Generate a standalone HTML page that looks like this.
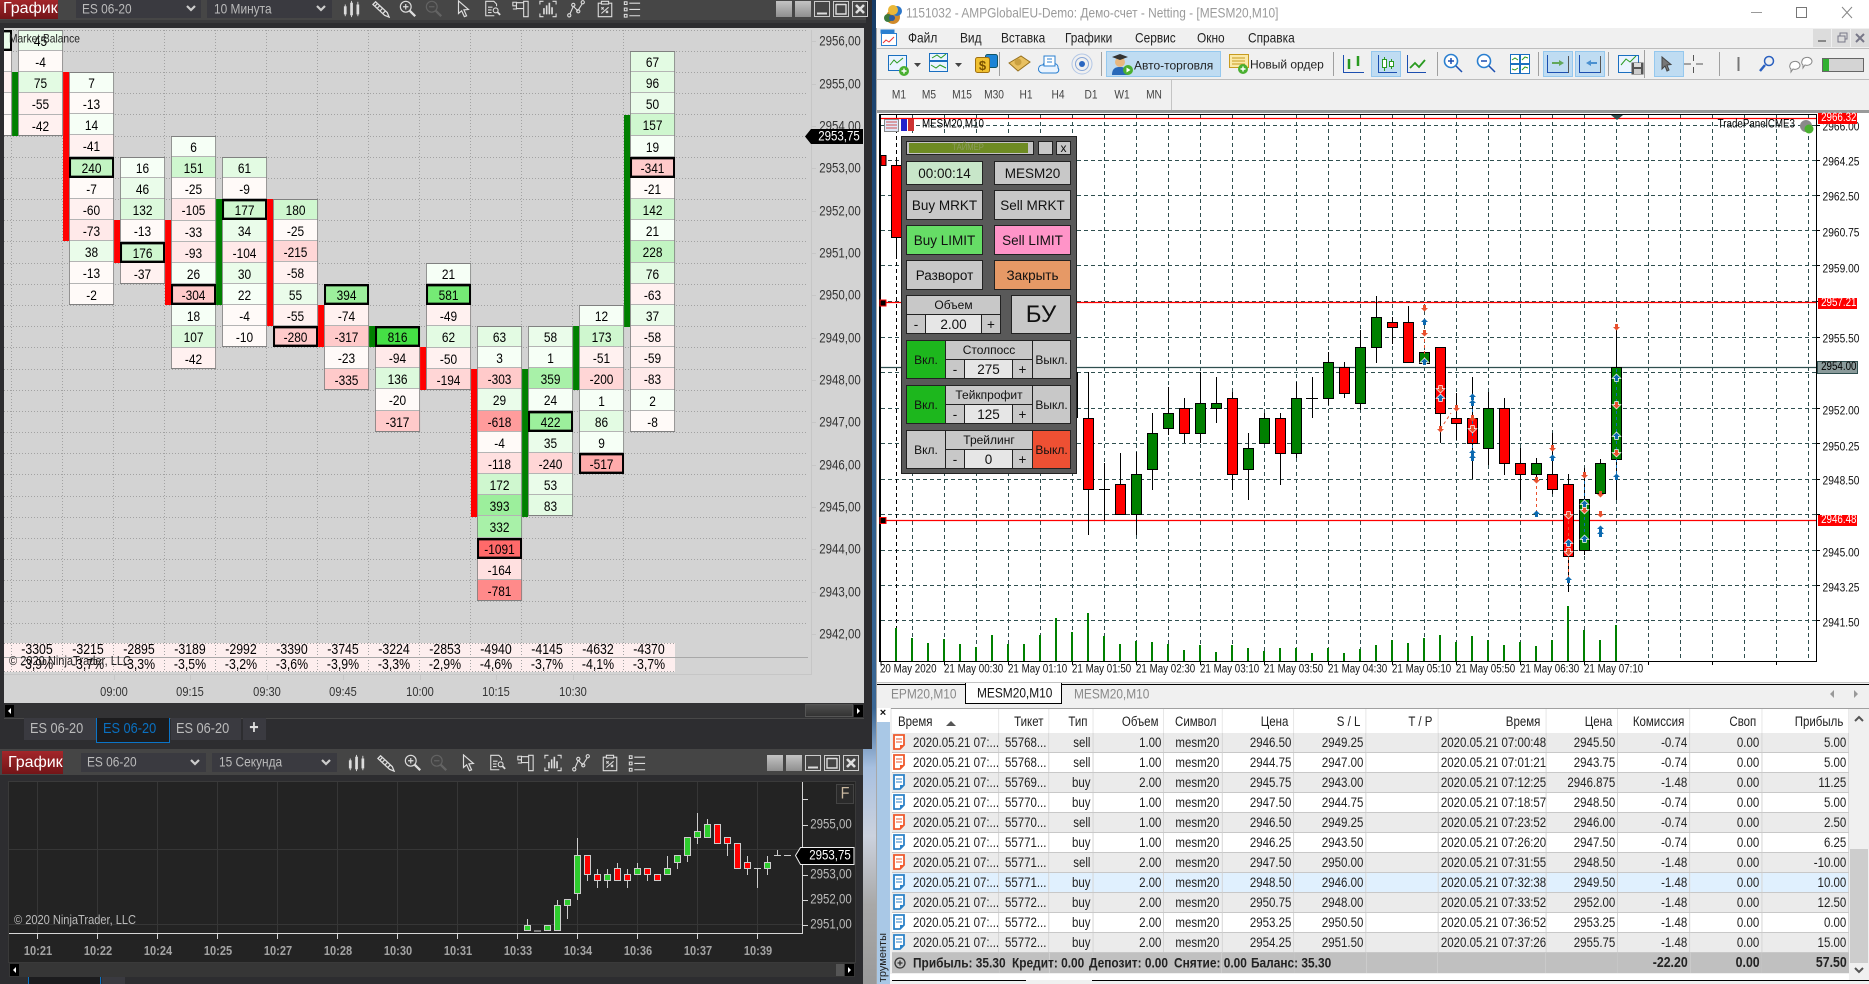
<!DOCTYPE html>
<html><head><meta charset="utf-8"><title>Chart</title>
<style>
html,body{margin:0;padding:0;width:1869px;height:984px;overflow:hidden;background:#8c9cb8}
body{font-family:"Liberation Sans","Noto Sans CJK SC",sans-serif;position:relative;color:#000}
div,svg{position:absolute}
.c,.l,.r{position:absolute;white-space:nowrap;line-height:1.1}
.c{transform:translate(-50%,-50%) scaleX(.85)}
.l{transform:translateY(-50%) scaleX(.85);transform-origin:0 50%}
.r{transform:translate(-100%,-50%) scaleX(.85);transform-origin:100% 50%}
.col{width:53px;transform:scaleX(.85);transform-origin:0 0;font-size:14px;text-align:center}
.col::after{content:"";position:absolute;inset:0;border:1px solid #808080;pointer-events:none}
.col b{display:block;height:21.17px;line-height:23px;font-weight:400;box-shadow:inset 0 -1px 0 #b4b4b4}
.col b.h{position:relative;z-index:2;box-shadow:inset 0 0 0 2.4px #000}
.g0{background:#f6fff6}.g1{background:#eafcea}.g2{background:#e3fbe3}.g3{background:#dcf9dc}.g4{background:#cff7cf}.g5{background:#c2f4c2}.g6{background:#a8f1a8}.g7{background:#9cef9c}.g8{background:#75ea75}.g9{background:#45e045}
.n0{background:#fffaf8}.n1{background:#fff1f0}.n2{background:#ffe9e9}.n3{background:#ffe0e0}.n4{background:#ffd6d6}.n5{background:#ffcaca}.n6{background:#ffabab}.n7{background:#ff9c9c}.n8{background:#ff8a8a}.n9{background:#ff6a6a}
.bar{width:6px}
.rd{background:#f00}.gr{background:#008000}
.p{font-size:13.5px;color:#333;margin:1px 0 0 2px}
.t1{font-size:14px}
.t3{font-size:14.5px}
.t2{font-size:13px;color:#333}
.nb{font-size:13px;color:#a4a4a4;font-weight:700}
.pb{font-size:13.5px;color:#bbb;margin-left:2px}
.sq{width:16px;height:16px;background:linear-gradient(#c4c4c4,#8f8f8f)}
.btn{background:#c8c8c8;border:1px solid #222;box-sizing:border-box;display:flex;align-items:center;justify-content:center;font-size:13.5px;color:#111;white-space:nowrap}
.sm{font-size:12px}
.sep{width:1px;background:#a0a0a0;top:52px;height:24px}
.tb{background:#bfdcf2;border:1px solid #95c8ee;box-sizing:border-box;top:51px;height:26px}
.m{font-size:14px;color:#222}
.tf{font-size:12px;color:#444}
.yl{font-size:12px;color:#111;margin:1.5px 0 0 3px}
.xl{font-size:11.5px;color:#111}
.lb{left:1818px;width:39px;height:11px;background:#f00;color:#fff;font-size:11.5px;text-align:center;line-height:11px}
table{position:absolute;left:892px;top:709px;width:1125.9px;table-layout:fixed;border-collapse:collapse;transform:scaleX(.85);transform-origin:0 0;font-size:13.5px;background:#fff}
td,th{padding:0 2.5px 0 3px;text-align:right;white-space:nowrap;overflow:hidden;height:19px;line-height:19px;font-weight:400;border-right:1px solid #cfcfcf;border-bottom:1px solid #c8c8c8;color:#222}
th{height:24px;padding-right:6px;background:#fff;border-bottom:0;border-right:1px solid #e3e3e3}
td:first-child{text-align:left;padding-left:24.7px}
th:first-child{text-align:left;padding-left:7px}
tr.o td{background:#ebebeb}
tr.s td{background:#e0f0fe}
tr.z td{background:#c0c0c0;font-weight:700;border-right:0;border-bottom:0;height:20px;font-size:14.5px}
</style></head><body>

<svg width="0" height="0" style="left:0;top:0"><defs>
<symbol id="i1" viewBox="0 0 20 20"><g fill="#ddd"><rect x="1" y="7" width="3" height="9"/><rect x="2" y="5" width="1" height="13"/><rect x="8" y="3" width="3" height="14"/><rect x="9" y="1" width="1" height="18"/><rect x="15" y="5" width="3" height="11"/><rect x="16" y="2" width="1" height="16"/></g></symbol>
<symbol id="i2" viewBox="0 0 20 20"><g fill="none" stroke="#ddd" stroke-width="1.4"><path d="M1 5l3-3 13 12 2 5-5-2z"/><path d="M3 7l3-3M6 9l3-3M9 12l3-3M12 15l3-3"/></g></symbol>
<symbol id="i3" viewBox="0 0 20 20"><g fill="none" stroke="#ddd" stroke-width="1.3"><circle cx="7.5" cy="7.5" r="6"/><path d="M4.5 7.5h6M7.5 4.5v6"/><path d="M12 12l6 6" stroke-width="2.6"/></g></symbol>
<symbol id="i4" viewBox="0 0 20 20"><g fill="none" stroke="#777" stroke-width="1.3" opacity=".6"><circle cx="7.5" cy="7.5" r="6"/><path d="M4.5 7.5h6"/><path d="M12 12l6 6" stroke-width="2.6"/></g></symbol>
<symbol id="i5" viewBox="0 0 20 20"><path d="M5 1v14l3.5-3 3 6.5 2.5-1-3-6.5 5-.5z" fill="none" stroke="#ddd" stroke-width="1.3"/></symbol>
<symbol id="i6" viewBox="0 0 20 20"><g fill="none" stroke="#ddd" stroke-width="1.2"><path d="M12 17.5H2.5v-16h9l3 3V7"/><path d="M5 8h5M5 11h4M5 14h4"/><circle cx="13.5" cy="11.5" r="2.7"/><path d="M15.5 13.5l3 3" stroke-width="2"/></g></symbol>
<symbol id="i7" viewBox="0 0 20 20"><g fill="none" stroke="#ddd" stroke-width="1.2"><path d="M1.5 2.5h4v4h-4zM1.5 10h4V6.5M5.5 3h8M5.5 9.5h8M13.5 1.5h5v17h-5z"/></g></symbol>
<symbol id="i8" viewBox="0 0 20 20"><g fill="none" stroke="#ddd" stroke-width="1.2"><path d="M1 5V1.500h4M15 1.500h4V5M1 15v3.500h4M15 18.500h4V15"/><path d="M5.500 9v7M8.500 6v10M11.500 3v13M14.500 8v8" stroke-width="1.8"/></g></symbol>
<symbol id="i9" viewBox="0 0 20 20"><g fill="none" stroke="#ddd" stroke-width="1.2"><path d="M3.500 15l3.500-8 5 5 5-8"/><circle cx="2.500" cy="17" r="1.800"/><circle cx="7" cy="5.500" r="1.800"/><circle cx="12.500" cy="12.500" r="1.800"/><circle cx="17.500" cy="2.500" r="1.800"/></g></symbol>
<symbol id="i10" viewBox="0 0 20 20"><g fill="none" stroke="#ddd" stroke-width="1.2"><path d="M6 3.500H2.500v15h15v-15H14M6 1.500h8v3H6z"/><path d="M6 8l2.500 2.500M8.500 8L6 10.500M11 12l2.500 2.500M13.500 12L11 14.500M6 15l8-7"/></g></symbol>
<symbol id="i11" viewBox="0 0 20 20"><g fill="none" stroke="#ddd" stroke-width="1.200"><rect x="1.500" y="2" width="3" height="3"/><rect x="1.500" y="9" width="3" height="3"/><rect x="1.500" y="16" width="3" height="3"/><path d="M7 3.500h12M7 10.500h12M7 17.500h12"/></g></symbol>
<symbol id="wmin" viewBox="0 0 16 16"><rect x=".5" y=".5" width="15" height="15" fill="none" stroke="#ccc"/><path d="M3 12.500h10" stroke="#ddd" stroke-width="2"/></symbol>
<symbol id="wmax" viewBox="0 0 16 16"><rect x=".5" y=".5" width="15" height="15" fill="none" stroke="#ccc"/><path d="M3 3.500h10M3 3v10h10V3" fill="none" stroke="#ddd" stroke-width="1.400"/></symbol>
<symbol id="wcl" viewBox="0 0 16 16"><rect x=".5" y=".5" width="15" height="15" fill="none" stroke="#ccc"/><path d="M4 4l8 8M12 4l-8 8" stroke="#ddd" stroke-width="2.600"/></symbol>
<symbol id="so" viewBox="0 0 13 16"><path d="M1 1h10v10l-4 4H1z" fill="#fff" stroke="#ef5a2c" stroke-width="1.800"/><path d="M3 5h6M3 8h6" stroke="#ef5a2c"/><path d="M7 15v-4h4z" fill="#ef5a2c"/></symbol>
<symbol id="sb" viewBox="0 0 13 16"><path d="M1 1h10v10l-4 4H1z" fill="#fff" stroke="#2d83c8" stroke-width="1.800"/><path d="M3 5h6M3 8h6" stroke="#2d83c8"/><path d="M7 15v-4h4z" fill="#2d83c8"/></symbol>
<path id="mu" d="M0-3.500 3.500 0h-2v3h-3V0h-2z"/>
<path id="md" d="M-1.500-3h3V0h2L0 3.500-3.500 0h2z"/>
</defs></svg>

<!-- wallpaper gap -->
<div style="left:860px;top:0;width:20px;height:984px;background:linear-gradient(#173c66 0,#2a5a8a 40%,#3a6795 72%,#a7c0e0 78%,#ccd2de 85%,#a8a8a8 92%,#9a9a9a 100%)"></div>

<!-- TOP LEFT WINDOW -->
<div style="left:0;top:0;width:872px;height:749px;background:#2d2d30"></div>
<div style="left:0;top:0;width:866px;height:20px;background:#464646"></div>
<div style="left:0;top:20px;width:866px;height:3px;background:#3a3a3c"></div>
<div style="left:0;top:0;width:58px;height:19px;background:linear-gradient(#a3262a,#731518)"></div>
<span class="l" style="left:3px;top:9px;font-size:16px;color:#fff;transform:translateY(-50%)">График</span>
<div style="left:76px;top:0;width:125px;height:18px;background:#3a3a40"></div>
<span class="l t1" style="left:82px;top:9px;color:#bbb">ES 06-20</span>
<svg style="left:185px;top:4px" width="12" height="9"><path d="M2 2l4 4 4-4" fill="none" stroke="#ccc" stroke-width="2.200"/></svg>
<div style="left:207px;top:0;width:125px;height:18px;background:#3a3a40"></div>
<span class="l t1" style="left:214px;top:9px;color:#bbb">10 Минута</span>
<svg style="left:315px;top:4px" width="12" height="9"><path d="M2 2l4 4 4-4" fill="none" stroke="#ccc" stroke-width="2.200"/></svg>
<svg style="left:342px;top:0" width="20" height="18"><use href="#i1"/></svg>
<svg style="left:371px;top:0" width="20" height="18"><use href="#i2"/></svg>
<svg style="left:399px;top:0" width="18" height="18"><use href="#i3"/></svg>
<svg style="left:425px;top:0" width="18" height="18"><use href="#i4"/></svg>
<svg style="left:453px;top:0" width="20" height="18"><use href="#i5"/></svg>
<svg style="left:483px;top:0" width="19" height="18"><use href="#i6"/></svg>
<svg style="left:511px;top:0" width="19" height="18"><use href="#i7"/></svg>
<svg style="left:539px;top:0" width="18" height="18"><use href="#i8"/></svg>
<svg style="left:567px;top:0" width="18" height="18"><use href="#i9"/></svg>
<svg style="left:596px;top:0" width="18" height="18"><use href="#i10"/></svg>
<svg style="left:623px;top:0" width="18" height="18"><use href="#i11"/></svg>
<div class="sq" style="left:776px;top:1px"></div><div class="sq" style="left:795px;top:1px"></div>
<svg style="left:814px;top:1px" width="16" height="16"><use href="#wmin"/></svg>
<svg style="left:833px;top:1px" width="16" height="16"><use href="#wmax"/></svg>
<svg style="left:852px;top:1px" width="16" height="16"><use href="#wcl"/></svg>

<!-- order-flow chart -->
<div style="left:4px;top:28px;width:860px;height:675px;overflow:hidden;background:#d3d3d3">
<div style="left:-4px;top:-28px;width:864px;height:703px">
<div style="left:4px;top:643px;width:671px;height:29px;background:#fdeeee"></div>
<svg width="864" height="703" style="left:0;top:0"><path fill="none" stroke="#a2a2a2" stroke-dasharray="1 2" d="M4 30.500H808M4 51.500H808M4 72.500H808M4 93.500H808M4 114.500H808M4 136.500H808M4 157.500H808M4 178.500H808M4 199.500H808M4 220.500H808M4 241.500H808M4 263.500H808M4 284.500H808M4 305.500H808M4 326.500H808M4 347.500H808M4 369.500H808M4 390.500H808M4 411.500H808M4 432.500H808M4 453.500H808M4 474.500H808M4 496.500H808M4 517.500H808M4 538.500H808M4 559.500H808M4 580.500H808M4 601.500H808M4 623.500H808M4 643.500H675M4 671.500H675M11.500 30V672M62.500 30V672M113.500 30V672M164.500 30V672M215.500 30V672M266.500 30V672M317.500 30V672M368.500 30V672M419.500 30V672M470.500 30V672M521.500 30V672M572.500 30V672M623.500 30V672"/><path fill="none" stroke="#a8a8a8" d="M4 657.500H808"/><path fill="none" stroke="#c6c6c6" d="M811.500 30V674M4 674.500H812M114.500 674V680M190.500 674V680M267.500 674V680M343.500 674V680M420.500 674V680M496.500 674V680M573.500 674V680M811 41.500h5M811 84.500h5M811 126.500h5M811 168.500h5M811 211.500h5M811 253.500h5M811 295.500h5M811 338.500h5M811 380.500h5M811 422.500h5M811 465.500h5M811 507.500h5M811 549.500h5M811 592.500h5M811 634.500h5"/></svg>

<div class="bar gr" style="left:12px;top:72px;height:64px"></div>
<div class="bar rd" style="left:63px;top:72px;height:169px"></div>
<div class="bar rd" style="left:114px;top:220px;height:43px"></div>
<div class="bar rd" style="left:165px;top:220px;height:85px"></div>
<div class="bar gr" style="left:216px;top:199px;height:106px"></div>
<div class="bar rd" style="left:267px;top:199px;height:127px"></div>
<div class="bar rd" style="left:318px;top:305px;height:42px"></div>
<div class="bar gr" style="left:369px;top:326px;height:21px"></div>
<div class="bar rd" style="left:420px;top:347px;height:43px"></div>
<div class="bar rd" style="left:471px;top:369px;height:148px"></div>
<div class="bar gr" style="left:522px;top:369px;height:148px"></div>
<div class="bar gr" style="left:573px;top:326px;height:64px"></div>
<div class="bar gr" style="left:624px;top:115px;height:212px"></div>

<div class="col" style="left:-33px;top:30px"><b class="g1 h"></b><b class="n0"></b><b class="n1"></b><b class="n0"></b><b class="n0"></b></div>
<div class="col" style="left:18px;top:30px"><b class="g1">45</b><b class="n0">-4</b><b class="g2">75</b><b class="n1">-55</b><b class="n1">-42</b></div>
<div class="col" style="left:69px;top:72px"><b class="g0">7</b><b class="n0">-13</b><b class="g0">14</b><b class="n1">-41</b><b class="g5 h">240</b><b class="n0">-7</b><b class="n1">-60</b><b class="n2">-73</b><b class="g1">38</b><b class="n0">-13</b><b class="n0">-2</b></div>
<div class="col" style="left:120px;top:157px"><b class="g0">16</b><b class="g1">46</b><b class="g3">132</b><b class="n0">-13</b><b class="g4 h">176</b><b class="n1">-37</b></div>
<div class="col" style="left:171px;top:136px"><b class="g0">6</b><b class="g4">151</b><b class="n0">-25</b><b class="n2">-105</b><b class="n1">-33</b><b class="n2">-93</b><b class="g0">26</b><b class="n5 h">-304</b><b class="g0">18</b><b class="g3">107</b><b class="n1">-42</b></div>
<div class="col" style="left:222px;top:157px"><b class="g2">61</b><b class="n0">-9</b><b class="g4 h">177</b><b class="g1">34</b><b class="n2">-104</b><b class="g1">30</b><b class="g0">22</b><b class="n0">-4</b><b class="n0">-10</b></div>
<div class="col" style="left:273px;top:199px"><b class="g4">180</b><b class="n0">-25</b><b class="n4">-215</b><b class="n1">-58</b><b class="g1">55</b><b class="n1">-55</b><b class="n5 h">-280</b></div>
<div class="col" style="left:324px;top:284px"><b class="g7 h">394</b><b class="n1">-74</b><b class="n5">-317</b><b class="n0">-23</b><b class="n5">-335</b></div>
<div class="col" style="left:375px;top:326px"><b class="g9 h">816</b><b class="n2">-94</b><b class="g3">136</b><b class="n0">-20</b><b class="n5">-317</b></div>
<div class="col" style="left:426px;top:263px"><b class="g0">21</b><b class="g8 h">581</b><b class="n1">-49</b><b class="g2">62</b><b class="n1">-50</b><b class="n4">-194</b></div>
<div class="col" style="left:477px;top:326px"><b class="g2">63</b><b class="g0">3</b><b class="n5">-303</b><b class="g1">29</b><b class="n7">-618</b><b class="n0">-4</b><b class="n3">-118</b><b class="g4">172</b><b class="g7">393</b><b class="g6">332</b><b class="n9 h">-1091</b><b class="n3">-164</b><b class="n8">-781</b></div>
<div class="col" style="left:528px;top:326px"><b class="g1">58</b><b class="g0">1</b><b class="g6">359</b><b class="g0">24</b><b class="g7 h">422</b><b class="g1">35</b><b class="n4">-240</b><b class="g1">53</b><b class="g2">83</b></div>
<div class="col" style="left:579px;top:305px"><b class="g0">12</b><b class="g4">173</b><b class="n1">-51</b><b class="n4">-200</b><b class="g0">1</b><b class="g2">86</b><b class="g0">9</b><b class="n6 h">-517</b></div>
<div class="col" style="left:630px;top:51px"><b class="g2">67</b><b class="g2">96</b><b class="g1">50</b><b class="g4">157</b><b class="g0">19</b><b class="n5 h">-341</b><b class="n0">-21</b><b class="g4">142</b><b class="g0">21</b><b class="g5">228</b><b class="g2">76</b><b class="n1">-63</b><b class="g1">37</b><b class="n1">-58</b><b class="n1">-59</b><b class="n2">-83</b><b class="g0">2</b><b class="n0">-8</b></div>

<span class="l" style="left:9px;top:39px;font-size:12px;color:#222">Market Balance</span>
<span class="c t3" style="left:37px;top:651px">-3305</span><span class="c t3" style="left:88px;top:651px">-3215</span><span class="c t3" style="left:139px;top:651px">-2895</span><span class="c t3" style="left:190px;top:651px">-3189</span><span class="c t3" style="left:241px;top:651px">-2992</span><span class="c t3" style="left:292px;top:651px">-3390</span><span class="c t3" style="left:343px;top:651px">-3745</span><span class="c t3" style="left:394px;top:651px">-3224</span><span class="c t3" style="left:445px;top:651px">-2853</span><span class="c t3" style="left:496px;top:651px">-4940</span><span class="c t3" style="left:547px;top:651px">-4145</span><span class="c t3" style="left:598px;top:651px">-4632</span><span class="c t3" style="left:649px;top:651px">-4370</span>
<span class="c t3" style="left:37px;top:666px">-3,9%</span><span class="c t3" style="left:88px;top:666px">-3,7%</span><span class="c t3" style="left:139px;top:666px">-3,3%</span><span class="c t3" style="left:190px;top:666px">-3,5%</span><span class="c t3" style="left:241px;top:666px">-3,2%</span><span class="c t3" style="left:292px;top:666px">-3,6%</span><span class="c t3" style="left:343px;top:666px">-3,9%</span><span class="c t3" style="left:394px;top:666px">-3,3%</span><span class="c t3" style="left:445px;top:666px">-2,9%</span><span class="c t3" style="left:496px;top:666px">-4,6%</span><span class="c t3" style="left:547px;top:666px">-3,7%</span><span class="c t3" style="left:598px;top:666px">-4,1%</span><span class="c t3" style="left:649px;top:666px">-3,7%</span>
<span class="l" style="left:9px;top:661px;font-size:13px;color:#222">© 2020 NinjaTrader, LLC</span>

<span class="c t2" style="left:114px;top:692px">09:00</span><span class="c t2" style="left:190px;top:692px">09:15</span><span class="c t2" style="left:267px;top:692px">09:30</span><span class="c t2" style="left:343px;top:692px">09:45</span><span class="c t2" style="left:420px;top:692px">10:00</span><span class="c t2" style="left:496px;top:692px">10:15</span><span class="c t2" style="left:573px;top:692px">10:30</span>

<span class="c p" style="left:838px;top:41px">2956,00</span><span class="c p" style="left:838px;top:84px">2955,00</span><span class="c p" style="left:838px;top:126px">2954,00</span><span class="c p" style="left:838px;top:168px">2953,00</span><span class="c p" style="left:838px;top:211px">2952,00</span><span class="c p" style="left:838px;top:253px">2951,00</span><span class="c p" style="left:838px;top:295px">2950,00</span><span class="c p" style="left:838px;top:338px">2949,00</span><span class="c p" style="left:838px;top:380px">2948,00</span><span class="c p" style="left:838px;top:422px">2947,00</span><span class="c p" style="left:838px;top:465px">2946,00</span><span class="c p" style="left:838px;top:507px">2945,00</span><span class="c p" style="left:838px;top:549px">2944,00</span><span class="c p" style="left:838px;top:592px">2943,00</span><span class="c p" style="left:838px;top:634px">2942,00</span>
<svg style="left:805px;top:129px" width="58" height="15"><path d="M0 7.500L6 0H58V15H6z" fill="#000"/></svg>
<span class="c p" style="left:837px;top:136px;color:#fff">2953,75</span>
</div></div>

<!-- top scroll + tabs -->
<div style="left:4px;top:703px;width:860px;height:15px;background:#323234;border-bottom:1px solid #484848"></div>
<div style="left:5px;top:705px;width:9px;height:12px;background:#000"></div>
<svg style="left:5px;top:705px" width="9" height="12"><path d="M6 3v6L3 6z" fill="#fff"/></svg>
<div style="left:805px;top:704px;width:48px;height:13px;background:linear-gradient(#4e4e4e,#333);border:1px solid #555;box-sizing:border-box"></div>
<div style="left:854px;top:705px;width:9px;height:12px;background:#000"></div>
<svg style="left:854px;top:705px" width="9" height="12"><path d="M3 3v6l3-3z" fill="#fff"/></svg>
<div style="left:24px;top:718px;width:72px;height:22px;background:#3a3a40"></div>
<span class="l" style="left:30px;top:729px;font-size:15px;color:#bbb">ES 06-20</span>
<div style="left:96px;top:718px;width:74px;height:25px;background:#1c1c1e;border:1px solid #0a74c8;border-top:0;box-sizing:border-box"></div>
<span class="l" style="left:103px;top:729px;font-size:15px;color:#0a70c0">ES 06-20</span>
<div style="left:171px;top:718px;width:70px;height:22px;background:#3a3a40"></div>
<span class="l" style="left:176px;top:729px;font-size:15px;color:#bbb">ES 06-20</span>
<div style="left:243px;top:718px;width:23px;height:22px;background:#3a3a40"></div>
<span class="c" style="left:254px;top:729px;font-size:19px;color:#ddd;font-weight:700">+</span>

<!-- BOTTOM LEFT WINDOW -->
<div style="left:0;top:749px;width:863px;height:235px;background:#2d2d30"></div>
<div style="left:0;top:749px;width:863px;height:26px;background:#454545"></div>
<div style="left:2px;top:751px;width:61px;height:23px;background:linear-gradient(#a3262a,#731518)"></div>
<span class="l" style="left:8px;top:763px;font-size:16px;color:#fff;transform:translateY(-50%)">График</span>
<div style="left:81px;top:753px;width:125px;height:19px;background:#3a3a40"></div>
<span class="l t1" style="left:87px;top:762px;color:#bbb">ES 06-20</span>
<svg style="left:189px;top:758px" width="12" height="9"><path d="M2 2l4 4 4-4" fill="none" stroke="#ccc" stroke-width="2.200"/></svg>
<div style="left:212px;top:753px;width:125px;height:19px;background:#3a3a40"></div>
<span class="l t1" style="left:219px;top:762px;color:#bbb">15 Секунда</span>
<svg style="left:320px;top:758px" width="12" height="9"><path d="M2 2l4 4 4-4" fill="none" stroke="#ccc" stroke-width="2.200"/></svg>
<svg style="left:347px;top:754px" width="20" height="18"><use href="#i1"/></svg>
<svg style="left:376px;top:754px" width="20" height="18"><use href="#i2"/></svg>
<svg style="left:404px;top:754px" width="18" height="18"><use href="#i3"/></svg>
<svg style="left:430px;top:754px" width="18" height="18"><use href="#i4"/></svg>
<svg style="left:458px;top:754px" width="20" height="18"><use href="#i5"/></svg>
<svg style="left:488px;top:754px" width="19" height="18"><use href="#i6"/></svg>
<svg style="left:516px;top:754px" width="19" height="18"><use href="#i7"/></svg>
<svg style="left:544px;top:754px" width="18" height="18"><use href="#i8"/></svg>
<svg style="left:572px;top:754px" width="18" height="18"><use href="#i9"/></svg>
<svg style="left:601px;top:754px" width="18" height="18"><use href="#i10"/></svg>
<svg style="left:628px;top:754px" width="18" height="18"><use href="#i11"/></svg>
<div class="sq" style="left:767px;top:755px"></div><div class="sq" style="left:786px;top:755px"></div>
<svg style="left:805px;top:755px" width="16" height="16"><use href="#wmin"/></svg>
<svg style="left:824px;top:755px" width="16" height="16"><use href="#wmax"/></svg>
<svg style="left:843px;top:755px" width="16" height="16"><use href="#wcl"/></svg>

<div style="left:8px;top:781px;width:848px;height:182px;background:#232323;border:1px solid #3a3a3a;box-sizing:border-box"></div>
<svg width="863" height="984" style="left:0;top:0">
<path stroke="#363636" fill="none" d="M37.500 782V933M97.500 782V933M157.500 782V933M217.500 782V933M277.500 782V933M337.500 782V933M397.500 782V933M457.500 782V933M517.500 782V933M577.500 782V933M637.500 782V933M697.500 782V933M757.500 782V933M9 849.500H802M9 924.500H802"/>
<path stroke="#d6d6d6" fill="none" d="M9 933.500H802.500V782M37.500 933V939M97.500 933V939M157.500 933V939M217.500 933V939M277.500 933V939M337.500 933V939M397.500 933V939M457.500 933V939M517.500 933V939M577.500 933V939M637.500 933V939M697.500 933V939M757.500 933V939M802 799.500h6M802 825.500h6M802 850.500h6M802 875.500h6M802 900.500h6M802 925.500h6"/>
<path stroke="#ccc" fill="none" d="M527.500 919V925M534 931h7M557.500 900V906M567.500 905V919M577.500 838V856M577.500 893V900M587.500 875V881M597.500 869V875M597.500 880V888M607.500 869V875M607.500 880V888M617.500 863V869M627.500 869V875M627.500 880V888M637.500 863V869M647.500 874V881M667.500 856V869M677.500 862V869M687.500 856V862M697.500 813V831M697.500 838V844M707.500 819V825M727.500 844V856M747.500 856V862M747.500 868V875M754 868.500h7M757.500 868V888M767.500 856V862M767.500 868V875M774 855.500h7M777.500 850V856M784 855.500h7"/>
<path stroke="#ccc" fill="#2ecc2e" d="M524.500 925.500h6v5h-6zM544.500 925.500h6v5h-6zM554.500 905.500h6v25h-6zM564.500 899.500h6v6h-6zM574.500 855.500h6v38h-6zM604.500 874.500h6v6h-6zM634.500 868.500h6v6h-6zM664.500 868.500h6v6h-6zM674.500 855.500h6v7h-6zM684.500 837.500h6v18h-6zM694.500 831.500h6v6h-6zM704.500 824.500h6v13h-6zM764.500 862.500h6v6h-6z"/>
<path stroke="#ccc" fill="#f00" d="M584.500 855.500h6v19h-6zM594.500 874.500h6v6h-6zM614.500 868.500h6v12h-6zM624.500 874.500h6v6h-6zM644.500 868.500h6v6h-6zM654.500 874.500h6v6h-6zM714.500 824.500h6v19h-6zM724.500 837.500h6v6h-6zM734.500 843.500h6v25h-6zM744.500 862.500h6v6h-6z"/>
<path fill="#000" stroke="#eee" d="M795.500 855.500l5-8h53.500v17H800.500z"/>
<rect x="836.500" y="784.500" width="17" height="19" fill="#2a2a2a" stroke="#444"/>
</svg>
<span class="c" style="left:845px;top:794px;font-size:17px;color:#c9b8a0">F</span>
<span class="l" style="left:14px;top:920px;font-size:13px;color:#bbb">© 2020 NinjaTrader, LLC</span>
<span class="c nb" style="left:38px;top:951px">10:21</span><span class="c nb" style="left:98px;top:951px">10:22</span><span class="c nb" style="left:158px;top:951px">10:24</span><span class="c nb" style="left:218px;top:951px">10:25</span><span class="c nb" style="left:278px;top:951px">10:27</span><span class="c nb" style="left:338px;top:951px">10:28</span><span class="c nb" style="left:398px;top:951px">10:30</span><span class="c nb" style="left:458px;top:951px">10:31</span><span class="c nb" style="left:518px;top:951px">10:33</span><span class="c nb" style="left:578px;top:951px">10:34</span><span class="c nb" style="left:638px;top:951px">10:36</span><span class="c nb" style="left:698px;top:951px">10:37</span><span class="c nb" style="left:758px;top:951px">10:39</span>
<span class="c pb" style="left:829px;top:825px">2955,00</span><span class="c pb" style="left:829px;top:875px">2953,00</span><span class="c pb" style="left:829px;top:900px">2952,00</span><span class="c pb" style="left:829px;top:925px">2951,00</span>
<span class="c" style="left:830px;top:856px;font-size:13.500px;color:#fff">2953,75</span>
<div style="left:9px;top:963px;width:846px;height:14px;background:#363636"></div>
<div style="left:10px;top:964px;width:9px;height:12px;background:#000"></div>
<svg style="left:10px;top:964px" width="9" height="12"><path d="M6 3v6L3 6z" fill="#fff"/></svg>
<div style="left:836px;top:964px;width:8px;height:12px;background:#555"></div>
<div style="left:845px;top:964px;width:9px;height:12px;background:#000"></div>
<svg style="left:845px;top:964px" width="9" height="12"><path d="M3 3v6l3-3z" fill="#fff"/></svg>
<div style="left:28px;top:977px;width:73px;height:7px;background:#1c1c1e;border-left:1px solid #0a74c8;border-right:1px solid #0a74c8;box-sizing:border-box"></div>
<div style="left:102px;top:977px;width:23px;height:7px;background:#3a3a40"></div>

<!-- RIGHT WINDOW -->
<div style="left:876px;top:0;width:993px;height:984px;background:#f0f0f0"></div>
<div style="left:876px;top:0;width:993px;height:28px;background:#fff"></div>
<div style="left:876px;top:28px;width:1px;height:956px;background:#a8a8a8"></div>
<svg style="left:883px;top:3px" width="20" height="22"><circle cx="10" cy="14" r="7" fill="#d08a2a"/><circle cx="5" cy="15" r="4" fill="#3d7a3d"/><circle cx="14" cy="8" r="5" fill="#2c76c9"/><circle cx="10" cy="7" r="5" fill="#eab838"/><circle cx="9" cy="15" r="3" fill="#2b5aa0"/></svg>
<span class="l" style="left:906px;top:13px;font-size:14px;color:#9a9a9a">1151032 - AMPGlobalEU-Demo: Демо-счет - Netting - [MESM20,M10]</span>
<svg style="left:1740px;top:4px" width="125" height="18"><path d="M11 8.500h11" stroke="#999" fill="none"/><rect x="56.500" y="3.500" width="10" height="10" fill="none" stroke="#777"/><path d="M102 3l10 11M112 3l-10 11" stroke="#888" fill="none"/></svg>

<svg style="left:880px;top:29px" width="20" height="18"><rect x=".5" y=".5" width="14" height="4" fill="#2a7fd0"/><rect x="1.500" y="4.500" width="15" height="12" fill="#fff" stroke="#2a7fd0"/><path d="M3 14l3-3 3 2 5-5" stroke="#e33" fill="none"/></svg>
<span class="l m" style="left:908px;top:38px">Файл</span><span class="l m" style="left:960px;top:38px">Вид</span><span class="l m" style="left:1001px;top:38px">Вставка</span><span class="l m" style="left:1065px;top:38px">Графики</span><span class="l m" style="left:1135px;top:38px">Сервис</span><span class="l m" style="left:1197px;top:38px">Окно</span><span class="l m" style="left:1248px;top:38px">Справка</span>
<div style="left:1813px;top:29px;width:18px;height:18px;background:#dcdcdc"></div><div style="left:1832px;top:29px;width:18px;height:18px;background:#dcdcdc"></div><div style="left:1851px;top:29px;width:18px;height:18px;background:#dcdcdc"></div>
<svg style="left:1813px;top:29px" width="56" height="18"><path d="M5 12h8" stroke="#888" stroke-width="2"/><path d="M25 7h7v6h-7zM27 7V4h7v6h-2" fill="none" stroke="#778"/><path d="M43 5l8 8M51 5l-8 8" stroke="#778" stroke-width="2"/></svg>

<div style="left:877px;top:48px;width:992px;height:1px;background:#bdbdbd"></div>
<div style="left:877px;top:79px;width:992px;height:1px;background:#bdbdbd"></div>
<div class="tb" style="left:1106px;width:115px"></div>
<div class="tb" style="left:1371px;width:30px"></div>
<div class="tb" style="left:1543px;width:30px"></div>
<div class="tb" style="left:1575px;width:30px"></div>
<div class="tb" style="left:1654px;width:30px"></div>
<div class="sep" style="left:999px"></div><div class="sep" style="left:1101px"></div><div class="sep" style="left:1333px"></div><div class="sep" style="left:1437px"></div><div class="sep" style="left:1538px"></div><div class="sep" style="left:1608px"></div><div class="sep" style="left:1644px;top:50px;height:28px"></div><div class="sep" style="left:1719px"></div>
<svg style="left:877px;top:49px" width="992" height="30">
<g fill="none"><rect x="11.500" y="6.500" width="18" height="15" stroke="#1a6fc0" fill="#eaf4ff"/><path d="M13 16l4-5 3 3 6-5" stroke="#2a9a20"/></g><circle cx="27" cy="22" r="5" fill="#4ab030"/><path d="M24.500 22h5M27 19.500v5" stroke="#fff" stroke-width="1.400"/><path d="M37 14h7l-3.500 4z" fill="#444"/>
<g fill="none"><rect x="52.500" y="4.500" width="18" height="7" stroke="#1a6fc0" fill="#eaf4ff"/><rect x="52.500" y="12.500" width="18" height="10" stroke="#1a6fc0" fill="#eaf4ff"/><path d="M55 9l5-3 4 3 5-4M54 16l5 3 4-3 6 3" stroke="#2a9a20"/></g><path d="M78 14h7l-3.500 4z" fill="#444"/>
<rect x="108.500" y="5.500" width="12" height="13" rx="2" fill="#1c84d6" stroke="#156"/><rect x="98.500" y="8.500" width="14" height="15" rx="2" fill="#f0c030" stroke="#a07010"/><text x="105.500" y="21" font-size="13" text-anchor="middle" font-family="Liberation Sans" fill="#7a5000" font-weight="700">$</text>
<path d="M132 14l12-7 9 6-12 9z" fill="#e8c060" stroke="#96701c"/><circle cx="141" cy="13" r="3.500" fill="#caa040"/>
<path d="M165 24a4 4 0 0 1 1-8 5 5 0 0 1 9-1 4 4 0 0 1 6 4 3 3 0 0 1-2 5z" fill="#eaf4ff" stroke="#2a7fd0"/><rect x="167" y="7" width="11" height="10" fill="#fff" stroke="#2a7fd0"/><path d="M170 10h5M170 13h5" stroke="#2a7fd0"/>
<circle cx="205" cy="15" r="3" fill="#2a66c0"/><circle cx="205" cy="15" r="6.500" fill="none" stroke="#8aa8d8"/><circle cx="205" cy="15" r="10" fill="none" stroke="#b3c7e6"/>
<circle cx="243" cy="13" r="5" fill="#e8b880"/><path d="M235 8l8-3 8 3-8 3z" fill="#333"/><path d="M235 26c0-7 4-8 8-8s8 1 8 8z" fill="#2868b8"/><circle cx="251" cy="21" r="5" fill="#4ab030"/><path d="M249.500 18.500v5l4-2.500z" fill="#fff"/>
<rect x="352.500" y="5.500" width="19" height="13" fill="#fbe9a8" stroke="#c79b20"/><path d="M355 9h13M355 12h13M355 15h13" stroke="#c79b20"/><circle cx="366" cy="20" r="5" fill="#4ab030"/><path d="M363.500 20h5M366 17.500v5" stroke="#fff" stroke-width="1.400"/>
<g fill="none" stroke="#1c4fb0"><path d="M466.500 6V23.500H487"/></g><path d="M472 10v10M481 7v10" stroke="#2a9a20" stroke-width="2.500"/>
<g fill="none"><path d="M501.500 6V23.500H520" stroke="#1c4fb0"/><path d="M507.500 8v14M514.500 10v10" stroke="#2a9a20"/><rect x="505.500" y="10.500" width="4" height="8" fill="#fff" stroke="#2a9a20"/><rect x="512.500" y="12.500" width="4" height="5" fill="#fff" stroke="#2a9a20"/></g>
<g fill="none"><path d="M530.500 6V23.500H549" stroke="#1c4fb0"/><path d="M533 19l5-5 4 4 6-7" stroke="#2a9a20" stroke-width="1.800"/></g>
<g fill="none"><circle cx="574" cy="12" r="6.500" stroke="#2a7fd0" stroke-width="1.600" fill="#fff"/><path d="M571 12h6M574 9v6M579 17l6 6" stroke="#1c4fb0" stroke-width="1.500"/></g>
<g fill="none"><circle cx="607" cy="12" r="6.500" stroke="#2a7fd0" stroke-width="1.600" fill="#fff"/><path d="M604 12h6M612 17l6 6" stroke="#1c4fb0" stroke-width="1.500"/></g>
<g fill="#fff" stroke="#1a6fc0"><rect x="633.500" y="5.500" width="9" height="9"/><rect x="643.500" y="5.500" width="9" height="9"/><rect x="633.500" y="15.500" width="9" height="9"/><rect x="643.500" y="15.500" width="9" height="9"/></g><path d="M635 11l3-2 3 2M645 11l3-3 3 1M635 20l3 1 3-2M645 21l3-3 3 1" stroke="#2a9a20" fill="none"/>
<g fill="none"><path d="M670.500 6V23.500H692" stroke="#1c4fb0"/><path d="M691.500 7v17" stroke="#555"/><path d="M675 14h7" stroke="#62a85a" stroke-width="2"/></g><path d="M682 11l5 3-5 3z" fill="#62a85a"/>
<g fill="none"><path d="M702.500 6V23.500H724" stroke="#1c4fb0"/><path d="M723.500 7v17" stroke="#555"/><path d="M714 14h6" stroke="#4a90d0" stroke-width="2"/></g><path d="M714 11l-5 3 5 3z" fill="#4a90d0"/>
<g fill="none"><rect x="741.500" y="6.500" width="20" height="17" stroke="#1a6fc0" fill="#eaf4ff"/><path d="M744 16l5-6 4 3 6-6" stroke="#2a9a20"/></g><rect x="754.500" y="13.500" width="12" height="12" fill="#555"/><rect x="757" y="14" width="7" height="4" fill="#ddd"/><rect x="757" y="20" width="7" height="5" fill="#ccc"/>
<path d="M785 8v12l3-3 2 5 2-1-2-5 4-.5z" fill="#777" stroke="#444"/>
<path d="M807 15h7M819 15h7M816.500 6v6M816.500 18v6" stroke="#555" fill="none"/>
<path d="M861.500 8v14" stroke="#777" stroke-width="2"/>
<circle cx="892" cy="12" r="4.500" fill="none" stroke="#2a60c0" stroke-width="1.500"/><path d="M888 16l-5 6" stroke="#2a60c0" stroke-width="2.500"/>
<path d="M925 12a5 4 0 1 1 3 4l-2 3 0-3a5 4 0 0 1-1-4z" fill="#fff" stroke="#888"/><path d="M913 16a5 4 0 1 1 3 4l-2 3 0-3a5 4 0 0 1-1-4z" fill="#fff" stroke="#888"/>
</svg>
<span class="l" style="left:1134px;top:66px;font-size:12px;color:#222;transform:translateY(-50%)">Авто-торговля</span>
<span class="l" style="left:1250px;top:65px;font-size:12px;color:#222;transform:translateY(-50%)">Новый ордер</span>
<div style="left:1822px;top:58px;width:42px;height:14px;background:#d4d4d4;border:1px solid #666;box-sizing:border-box"></div>
<div style="left:1823px;top:59px;width:6px;height:12px;background:#30b030"></div>

<span class="c tf" style="left:899px;top:95px">M1</span><span class="c tf" style="left:929px;top:95px">M5</span><span class="c tf" style="left:962px;top:95px">M15</span><span class="c tf" style="left:994px;top:95px">M30</span><span class="c tf" style="left:1026px;top:95px">H1</span><span class="c tf" style="left:1058px;top:95px">H4</span><span class="c tf" style="left:1091px;top:95px">D1</span><span class="c tf" style="left:1122px;top:95px">W1</span><span class="c tf" style="left:1154px;top:95px">MN</span>
<div style="left:1171px;top:80px;width:1px;height:30px;background:#c4c4c4"></div>

<!-- MT5 chart -->
<div style="left:877px;top:110px;width:992px;height:3px;background:#9a9a9a"></div>
<div style="left:877px;top:113px;width:992px;height:569px;background:#fff"></div>
<svg width="1869" height="700" style="left:0;top:0">
<g fill="none" stroke="#2f4f4f" stroke-dasharray="4 3">
<path d="M881 125.500H1816M881 160.500H1816M881 195.500H1816M881 230.500H1816M881 265.500H1816M881 301.500H1816M881 337.500H1816M881 372.500H1816M881 408.500H1816M881 443.500H1816M881 479.500H1816M881 514.500H1816M881 550.500H1816M881 585.500H1816M881 620.500H1816"/>
<path d="M912.500 115V661M944.500 115V661M976.500 115V661M1008.500 115V661M1040.500 115V661M1072.500 115V661M1104.500 115V661M1136.500 115V661M1168.500 115V661M1200.500 115V661M1232.500 115V661M1264.500 115V661M1296.500 115V661M1328.500 115V661M1360.500 115V661M1392.500 115V661M1424.500 115V661M1456.500 115V661M1488.500 115V661M1520.500 115V661M1552.500 115V661M1584.500 115V661M1616.500 115V661M1648.500 115V661M1680.500 115V661M1712.500 115V661M1744.500 115V661M1776.500 115V661M1808.500 115V661"/>
<path d="M896.500 115V661" stroke="#000"/>
</g>
<path d="M881 118.500H1816M881 302.500H1816M881 520.500H1816" stroke="#f00" stroke-width="1.300" fill="none"/>
<path d="M881 367.500H1816" stroke="#2f4f4f" stroke-width="1.300" fill="none"/>
<path d="M1816.500 114V662M879 114.500H1817M879 661.500H1817" stroke="#000" fill="none"/><path d="M880 114V662" stroke="#000" stroke-width="2"/>
<path stroke="#000" fill="none" d="M881 661V665M944.500 661V665M1008.500 661V665M1072.500 661V665M1136.500 661V665M1200.500 661V665M1264.500 661V665M1328.500 661V665M1392.500 661V665M1456.500 661V665M1520.500 661V665M1584.500 661V665M1648.500 661V665M1712.500 661V665M1776.500 661V665M1816 125.500h4M1816 160.500h4M1816 195.500h4M1816 230.500h4M1816 265.500h4M1816 301.500h4M1816 337.500h4M1816 372.500h4M1816 408.500h4M1816 443.500h4M1816 479.500h4M1816 514.500h4M1816 550.500h4M1816 585.500h4M1816 620.500h4"/>
<path d="M1611 115h12l-6 5z" fill="#2f4f4f"/>
<path stroke="#000" fill="none" d="M896.500 160V257M1077.500 372V418M1088.500 372V535M1104.500 463V520M1099 489.500h11M1120.500 453V484M1136.500 452V535M1152.500 413V490M1168.500 387V435M1184.500 398V443M1200.500 372V443M1216.500 377V423M1232.500 392V490M1248.500 433V500M1264.500 413V443M1280.500 413V485M1296.500 382V458M1312.500 377V418M1306 398.500h12M1328.500 352V405M1344.500 362V398M1360.500 330V410M1376.500 296V363M1392.500 317V344M1408.500 306V362M1440.500 347V443M1456.500 393V440M1472.500 377V479M1488.500 392V465M1504.500 398V475M1520.500 448V500M1536.500 458V478M1552.500 433V494M1568.500 474V592M1584.500 468V555M1600.500 459V495M1616.500 324V500"/>
<path stroke="#000" fill="#f00" d="M881 155.500h5v10h-5zM891.500 165.500h10v72h-10zM1083.500 418.500h10v71h-10zM1115.500 484.500h10v30h-10zM1179.500 408.500h10v25h-10zM1227.500 398.500h10v76h-10zM1275.500 418.500h10v35h-10zM1339.500 367.500h10v26h-10zM1387.500 322.500h10v5h-10zM1403.500 322.500h10v40h-10zM1435.500 347.500h10v66h-10zM1451.500 418.500h10v5h-10zM1467.500 418.500h10v25h-10zM1499.500 408.500h10v55h-10zM1515.500 463.500h10v11h-10zM1547.500 474.500h10v15h-10zM1563.500 484.500h10v72h-10z"/>
<path stroke="#000" fill="#008000" d="M1131.500 474.500h10v40h-10zM1147.500 433.500h10v36h-10zM1163.500 413.500h10v15h-10zM1195.500 403.500h10v30h-10zM1211.500 403.500h10v5h-10zM1243.500 448.500h10v21h-10zM1259.500 418.500h10v25h-10zM1291.500 398.500h10v55h-10zM1323.500 362.500h10v36h-10zM1355.500 347.500h10v56h-10zM1371.500 317.500h10v30h-10zM1419.500 352.500h10v11h-10zM1483.500 408.500h10v40h-10zM1531.500 463.500h10v11h-10zM1579.500 499.500h10v51h-10zM1595.500 463.500h10v30h-10zM1611.500 367.500h10v92h-10z"/>
<g fill="none" stroke-dasharray="3 3"><path d="M1424.500 333V360M1536.500 480V514M1568.500 515V580M1440.500 429L1451 413" stroke="#e8502e"/><path d="M1472.500 403V453M1584.500 475V539M1616.500 369V477" stroke="#0b69b0"/></g>
<g fill="#e8502e"><use href="#md" x="1424.500" y="308"/><use href="#md" x="1424.500" y="333"/><use href="#md" x="1440.500" y="429"/><use href="#md" x="1456.500" y="408"/><use href="#md" x="1472.500" y="418"/><use href="#md" x="1536.500" y="480"/><use href="#md" x="1552.500" y="448"/><use href="#md" x="1584.500" y="475"/><use href="#md" x="1600.500" y="494"/><use href="#md" x="1600.500" y="514"/><use href="#md" x="1616.500" y="327"/></g>
<g fill="#0b69b0"><use href="#mu" x="1424.500" y="322"/><use href="#mu" x="1472.500" y="397"/><use href="#mu" x="1472.500" y="403"/><use href="#mu" x="1472.500" y="453"/><use href="#mu" x="1472.500" y="458"/><use href="#mu" x="1536.500" y="514"/><use href="#mu" x="1552.500" y="458"/><use href="#mu" x="1568.500" y="580"/><use href="#mu" x="1600.500" y="529"/><use href="#mu" x="1600.500" y="534"/><use href="#mu" x="1616.500" y="477"/></g>
<g stroke="#fff" stroke-width="1.400" paint-order="stroke" fill="#e8502e"><use href="#md" x="1440.500" y="389"/><use href="#md" x="1472.500" y="429"/><use href="#md" x="1568.500" y="515"/><use href="#md" x="1568.500" y="552"/><use href="#md" x="1584.500" y="510"/><use href="#md" x="1616.500" y="405"/><use href="#md" x="1616.500" y="453"/></g>
<g stroke="#fff" stroke-width="1.400" paint-order="stroke" fill="#0b69b0"><use href="#mu" x="1424.500" y="362"/><use href="#mu" x="1440.500" y="398"/><use href="#mu" x="1568.500" y="543"/><use href="#mu" x="1584.500" y="504"/><use href="#mu" x="1584.500" y="539"/><use href="#mu" x="1616.500" y="378"/><use href="#mu" x="1616.500" y="436"/></g>
<path stroke="#008000" stroke-width="2" fill="none" d="M896 628V661M912 638V661M928 643V661M944 639V661M960 644V661M976 647V661M992 635V661M1008 644V661M1024 644V661M1040 635V661M1056 618V661M1072 632V661M1088 613V661M1104 636V661M1120 644V661M1136 641V661M1152 642V661M1168 644V661M1184 650V661M1200 645V661M1216 652V661M1232 645V661M1248 648V661M1264 651V661M1280 648V661M1296 648V661M1312 653V661M1328 648V661M1344 653V661M1360 649V661M1376 645V661M1392 640V661M1408 643V661M1424 638V661M1440 635V661M1456 642V661M1472 636V661M1488 640V661M1504 645V661M1520 642V661M1536 646V661M1552 640V661M1568 606V661M1584 630V661M1600 640V661M1616 625V661"/>
<rect x="880" y="300" width="6" height="6" fill="#000" stroke="#f00"/><rect x="880" y="517.500" width="6" height="6" fill="#000" stroke="#f00"/>
<rect x="884.500" y="119.500" width="14" height="12" fill="#dfe8f8" stroke="#888"/><path d="M886 122h11M886 125h11M886 128h11" stroke="#d05050"/>
<rect x="901" y="119" width="6" height="12" fill="#2222cc"/><rect x="908" y="119" width="6" height="12" fill="#cc3333"/>
<circle cx="1806" cy="126" r="6" fill="#8a8a8a"/><circle cx="1809" cy="129" r="4.500" fill="#4ab030"/>
</svg>
<span class="l" style="left:922px;top:125px;font-size:11.500px">MESM20,M10</span>
<span class="r" style="left:1795px;top:125px;font-size:11.500px">TradePanelCME3</span>

<span class="xl l" style="left:880px;top:670px">20 May 2020</span><span class="xl l" style="left:943.500px;top:670px">21 May 00:30</span><span class="xl l" style="left:1007.500px;top:670px">21 May 01:10</span><span class="xl l" style="left:1071.500px;top:670px">21 May 01:50</span><span class="xl l" style="left:1135.500px;top:670px">21 May 02:30</span><span class="xl l" style="left:1199.500px;top:670px">21 May 03:10</span><span class="xl l" style="left:1263.500px;top:670px">21 May 03:50</span><span class="xl l" style="left:1327.500px;top:670px">21 May 04:30</span><span class="xl l" style="left:1391.500px;top:670px">21 May 05:10</span><span class="xl l" style="left:1455.500px;top:670px">21 May 05:50</span><span class="xl l" style="left:1519.500px;top:670px">21 May 06:30</span><span class="xl l" style="left:1583.500px;top:670px">21 May 07:10</span>

<span class="c yl" style="left:1838px;top:125px">2966.00</span><span class="c yl" style="left:1838px;top:160px">2964.25</span><span class="c yl" style="left:1838px;top:195px">2962.50</span><span class="c yl" style="left:1838px;top:231px">2960.75</span><span class="c yl" style="left:1838px;top:267px">2959.00</span><span class="c yl" style="left:1838px;top:337px">2955.50</span><span class="c yl" style="left:1838px;top:409px">2952.00</span><span class="c yl" style="left:1838px;top:445px">2950.25</span><span class="c yl" style="left:1838px;top:479px">2948.50</span><span class="c yl" style="left:1838px;top:551px">2945.00</span><span class="c yl" style="left:1838px;top:586px">2943.25</span><span class="c yl" style="left:1838px;top:621px">2941.50</span>
<div class="lb" style="top:113px"><span style="display:inline-block;transform:scaleX(.85)">2966.32</span></div>
<div class="lb" style="top:298px"><span style="display:inline-block;transform:scaleX(.85)">2957.21</span></div>
<div class="lb" style="top:515px"><span style="display:inline-block;transform:scaleX(.85)">2946.48</span></div>
<div class="lb" style="top:362px;background:#8a9a9a;color:#000;outline:1px solid #2f4f4f"><span style="display:inline-block;transform:scaleX(.85)">2954.00</span></div>

<!-- Trade panel -->
<div style="left:901px;top:136px;width:176px;height:338px;background:#595959;border:1px solid #222;box-sizing:border-box"></div>
<div style="left:906px;top:141px;width:128px;height:14px;background:#c4c4c4;border:1px solid #222;box-sizing:border-box"></div>
<div style="left:909px;top:143px;width:119px;height:10px;background:#6e8b23"></div>
<span class="c" style="left:968px;top:148px;font-size:9px;color:#8c9c60">ТАЙМЕР</span>
<div class="btn" style="left:1038px;top:141px;width:15px;height:14px"></div>
<div class="btn sm" style="left:1056px;top:141px;width:15px;height:14px">x</div>
<div class="btn" style="left:906px;top:161px;width:77px;height:24px;background:#c8e6c9">00:00:14</div>
<div class="btn" style="left:994px;top:161px;width:77px;height:24px">MESM20</div>
<div class="btn" style="left:906px;top:190px;width:77px;height:30px">Buy MRKT</div>
<div class="btn" style="left:994px;top:190px;width:77px;height:30px">Sell MRKT</div>
<div class="btn" style="left:906px;top:225px;width:77px;height:30px;background:#66dd66">Buy LIMIT</div>
<div class="btn" style="left:994px;top:225px;width:77px;height:30px;background:#ff94c8">Sell LIMIT</div>
<div class="btn" style="left:906px;top:260px;width:77px;height:30px">Разворот</div>
<div class="btn" style="left:994px;top:260px;width:77px;height:30px;background:#e69966">Закрыть</div>
<div class="btn sm" style="left:906px;top:295px;width:95px;height:20px">Объем</div>
<div class="btn" style="left:906px;top:314px;width:20px;height:20px">-</div>
<div class="btn" style="left:925px;top:314px;width:57px;height:20px;background:#e6e6e6">2.00</div>
<div class="btn" style="left:981px;top:314px;width:20px;height:20px">+</div>
<div class="btn" style="left:1011px;top:295px;width:60px;height:39px;font-size:24px">БУ</div>

<div class="btn sm" style="left:906px;top:340px;width:40px;height:39px;background:#1db71d">Вкл.</div>
<div class="btn sm" style="left:945px;top:340px;width:88px;height:20px">Столпосс</div>
<div class="btn" style="left:945px;top:359px;width:20px;height:20px">-</div>
<div class="btn" style="left:964px;top:359px;width:49px;height:20px;background:#e6e6e6">275</div>
<div class="btn" style="left:1012px;top:359px;width:21px;height:20px">+</div>
<div class="btn sm" style="left:1032px;top:340px;width:39px;height:39px">Выкл.</div>

<div class="btn sm" style="left:906px;top:385px;width:40px;height:39px;background:#1db71d">Вкл.</div>
<div class="btn sm" style="left:945px;top:385px;width:88px;height:20px">Тейкпрофит</div>
<div class="btn" style="left:945px;top:404px;width:20px;height:20px">-</div>
<div class="btn" style="left:964px;top:404px;width:49px;height:20px;background:#e6e6e6">125</div>
<div class="btn" style="left:1012px;top:404px;width:21px;height:20px">+</div>
<div class="btn sm" style="left:1032px;top:385px;width:39px;height:39px">Выкл.</div>

<div class="btn sm" style="left:906px;top:430px;width:40px;height:39px">Вкл.</div>
<div class="btn sm" style="left:945px;top:430px;width:88px;height:20px">Трейлинг</div>
<div class="btn" style="left:945px;top:449px;width:20px;height:20px">-</div>
<div class="btn" style="left:964px;top:449px;width:49px;height:20px;background:#e6e6e6">0</div>
<div class="btn" style="left:1012px;top:449px;width:21px;height:20px">+</div>
<div class="btn sm" style="left:1032px;top:430px;width:39px;height:39px;background:#ee5033">Выкл.</div>

<!-- tabs -->
<div style="left:877px;top:682px;width:992px;height:1px;background:#c4c4c4"></div>
<div style="left:877px;top:684px;width:88px;height:1px;background:#000"></div>
<div style="left:1061px;top:684px;width:808px;height:1px;background:#000"></div>
<div style="left:965px;top:683px;width:97px;height:21px;background:#fff;border:1px solid #000;border-top:0;box-sizing:border-box"></div>
<span class="l" style="left:891px;top:694px;font-size:14px;color:#888">EPM20,M10</span>
<span class="l" style="left:977px;top:693px;font-size:14px;color:#111">MESM20,M10</span>
<span class="l" style="left:1074px;top:694px;font-size:14px;color:#888">MESM20,M10</span>
<svg style="left:1828px;top:688px" width="32" height="12"><path d="M6 2v8L2 6zM26 2v8l4-4z" fill="#999"/></svg>

<!-- toolbox strip -->
<div style="left:877px;top:708px;width:13px;height:14px;background:#fff"></div>
<span class="c" style="left:883px;top:713px;font-size:11px;font-weight:700;color:#111;transform:translate(-50%,-50%)">×</span>
<div style="left:877px;top:722px;width:13px;height:262px;background:#a9c8e6"></div>
<span style="position:absolute;left:877px;top:933px;writing-mode:vertical-rl;transform:rotate(180deg);font-size:11px;line-height:13px;color:#222;white-space:nowrap">трументы</span>

<!-- table -->
<div style="left:891px;top:708px;width:978px;height:1px;background:#a0a0a0"></div>
<table>
<colgroup><col style="width:125.900px"><col style="width:58.800px"><col style="width:51.800px"><col style="width:83.500px"><col style="width:68.200px"><col style="width:84.700px"><col style="width:84.700px"><col style="width:84.700px"><col style="width:127px"><col style="width:84.700px"><col style="width:84.700px"><col style="width:84.700px"><col style="width:102.400px"></colgroup>
<tr><th>Время</th><th>Тикет</th><th>Тип</th><th>Объем</th><th>Символ</th><th>Цена</th><th>S / L</th><th>T / P</th><th>Время</th><th>Цена</th><th>Комиссия</th><th>Своп</th><th>Прибыль</th></tr>
<tr class="o"><td>2020.05.21 07:...</td><td>55768...</td><td>sell</td><td>1.00</td><td>mesm20</td><td>2946.50</td><td>2949.25</td><td></td><td>2020.05.21 07:00:48</td><td>2945.50</td><td>-0.74</td><td>0.00</td><td>5.00</td></tr>
<tr><td>2020.05.21 07:...</td><td>55768...</td><td>sell</td><td>1.00</td><td>mesm20</td><td>2944.75</td><td>2947.00</td><td></td><td>2020.05.21 07:01:21</td><td>2943.75</td><td>-0.74</td><td>0.00</td><td>5.00</td></tr>
<tr class="o"><td>2020.05.21 07:...</td><td>55769...</td><td>buy</td><td>2.00</td><td>mesm20</td><td>2945.75</td><td>2943.00</td><td></td><td>2020.05.21 07:12:25</td><td>2946.875</td><td>-1.48</td><td>0.00</td><td>11.25</td></tr>
<tr><td>2020.05.21 07:...</td><td>55770...</td><td>buy</td><td>1.00</td><td>mesm20</td><td>2947.50</td><td>2944.75</td><td></td><td>2020.05.21 07:18:57</td><td>2948.50</td><td>-0.74</td><td>0.00</td><td>5.00</td></tr>
<tr class="o"><td>2020.05.21 07:...</td><td>55770...</td><td>sell</td><td>1.00</td><td>mesm20</td><td>2946.50</td><td>2949.25</td><td></td><td>2020.05.21 07:23:52</td><td>2946.00</td><td>-0.74</td><td>0.00</td><td>2.50</td></tr>
<tr><td>2020.05.21 07:...</td><td>55771...</td><td>buy</td><td>1.00</td><td>mesm20</td><td>2946.25</td><td>2943.50</td><td></td><td>2020.05.21 07:26:20</td><td>2947.50</td><td>-0.74</td><td>0.00</td><td>6.25</td></tr>
<tr class="o"><td>2020.05.21 07:...</td><td>55771...</td><td>sell</td><td>2.00</td><td>mesm20</td><td>2947.50</td><td>2950.00</td><td></td><td>2020.05.21 07:31:55</td><td>2948.50</td><td>-1.48</td><td>0.00</td><td>-10.00</td></tr>
<tr class="s"><td>2020.05.21 07:...</td><td>55771...</td><td>buy</td><td>2.00</td><td>mesm20</td><td>2948.50</td><td>2946.00</td><td></td><td>2020.05.21 07:32:38</td><td>2949.50</td><td>-1.48</td><td>0.00</td><td>10.00</td></tr>
<tr class="o"><td>2020.05.21 07:...</td><td>55772...</td><td>buy</td><td>2.00</td><td>mesm20</td><td>2950.75</td><td>2948.00</td><td></td><td>2020.05.21 07:33:52</td><td>2952.00</td><td>-1.48</td><td>0.00</td><td>12.50</td></tr>
<tr><td>2020.05.21 07:...</td><td>55772...</td><td>buy</td><td>2.00</td><td>mesm20</td><td>2953.25</td><td>2950.50</td><td></td><td>2020.05.21 07:36:52</td><td>2953.25</td><td>-1.48</td><td>0.00</td><td>0.00</td></tr>
<tr class="o"><td>2020.05.21 07:...</td><td>55772...</td><td>buy</td><td>2.00</td><td>mesm20</td><td>2954.25</td><td>2951.50</td><td></td><td>2020.05.21 07:37:26</td><td>2955.75</td><td>-1.48</td><td>0.00</td><td>15.00</td></tr>
<tr class="z"><td></td><td></td><td></td><td></td><td></td><td></td><td></td><td></td><td></td><td></td><td>-22.20</td><td>0.00</td><td>57.50</td></tr>
</table>
<svg style="left:892px;top:700px" width="80" height="280">
<path d="M54 24h10l-5-5z" fill="#555" transform="translate(0,2)"/>
<use href="#so" x="1" y="34" width="13" height="16"/><use href="#so" x="1" y="54" width="13" height="16"/><use href="#sb" x="1" y="74" width="13" height="16"/><use href="#sb" x="1" y="94" width="13" height="16"/><use href="#so" x="1" y="114" width="13" height="16"/><use href="#sb" x="1" y="134" width="13" height="16"/><use href="#so" x="1" y="154" width="13" height="16"/><use href="#sb" x="1" y="174" width="13" height="16"/><use href="#sb" x="1" y="194" width="13" height="16"/><use href="#sb" x="1" y="214" width="13" height="16"/><use href="#sb" x="1" y="234" width="13" height="16"/>
<circle cx="8" cy="263" r="5" fill="none" stroke="#333" stroke-width="1.300"/><path d="M5.500 263h5M8 260.500v5" stroke="#333" stroke-width="1.300"/>
</svg>
<span class="l" style="left:913px;top:963px;font-size:14px;font-weight:700;color:#222">Прибыль: 35.30</span>
<span class="l" style="left:1012px;top:963px;font-size:14px;font-weight:700;color:#222">Кредит: 0.00</span>
<span class="l" style="left:1089px;top:963px;font-size:14px;font-weight:700;color:#222">Депозит: 0.00</span>
<span class="l" style="left:1174px;top:963px;font-size:14px;font-weight:700;color:#222">Снятие: 0.00</span>
<span class="l" style="left:1251px;top:963px;font-size:14px;font-weight:700;color:#222">Баланс: 35.30</span>

<!-- table scrollbar -->
<div style="left:1849px;top:709px;width:20px;height:271px;background:#f0f0f0"></div>
<div style="left:1850px;top:849px;width:18px;height:114px;background:#cdcdcd"></div>
<svg style="left:1850px;top:710px" width="18" height="270"><path d="M5 11l4-4 4 4M5 258l4 4 4-4" fill="none" stroke="#555" stroke-width="2"/></svg>

<!-- below table -->
<div style="left:890px;top:974px;width:959px;height:6px;background:#fff"></div>
<div style="left:892px;top:980px;width:134px;height:1px;background:#000"></div>
<div style="left:1092px;top:980px;width:777px;height:1px;background:#000"></div>
</body></html>
